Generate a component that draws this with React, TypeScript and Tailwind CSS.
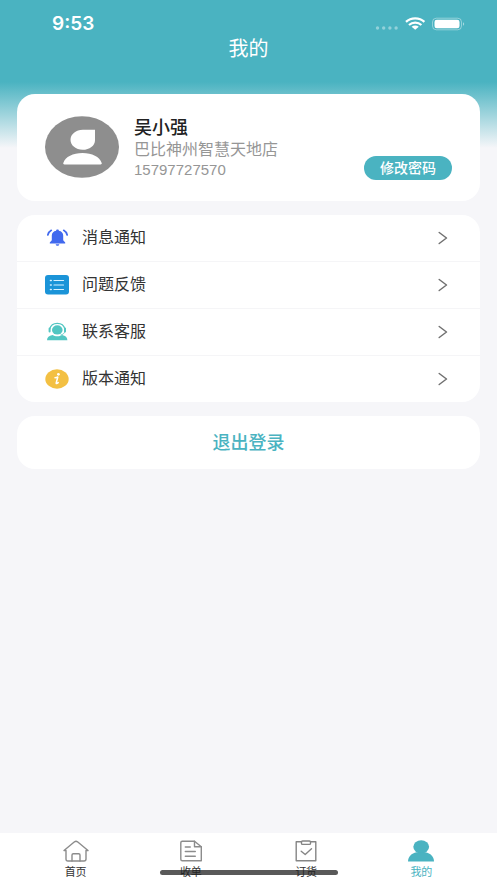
import type { ReactNode } from "react";

interface MenuItem {
  label: string;
  icon: ReactNode;
}

interface Tab {
  label: string;
  icon: ReactNode;
  active?: boolean;
}

const BellIcon = () => (
  <svg width="24" height="20" viewBox="0 0 24 20" fill="none">
    <path d="M12.500 1.500c.9 0 1.400.5 1.400 1.200 2.700.5 4.300 2.300 4.300 4.900v4.700l2 2.200v.9H4.800v-.9l2-2.200V7.600c0-2.600 1.600-4.400 4.300-4.900 0-.7.500-1.200 1.400-1.200Z" fill="#4169ee" />
    <path d="M10.700 16.300h3.600c-.2 1-.9 1.500-1.800 1.500s-1.600-.5-1.800-1.500Z" fill="#4169ee" />
    <path d="M6.300 2.300C4.500 3.300 3.300 4.900 2.800 7M18.700 2.300c1.800 1 3 2.600 3.500 4.700" stroke="#4169ee" strokeWidth="1.700" strokeLinecap="round" />
  </svg>
);

const ListIcon = () => (
  <svg width="24" height="20" viewBox="0 0 24 20" fill="none">
    <rect width="24" height="19.500" rx="3" fill="#1b94d8" />
    <path d="M9 5.500h9.500M9 10h9.500M9 14.500h9.500" stroke="#d8f1ff" strokeWidth="1.200" strokeLinecap="round" />
    <path d="M5.500 5.500h.7M5.500 10h.7M5.500 14.500h.7" stroke="#d8f1ff" strokeWidth="1.600" strokeLinecap="round" />
  </svg>
);

const ServiceIcon = () => (
  <svg width="24" height="20" viewBox="0 0 24 20" fill="none">
    <ellipse cx="12.300" cy="7.900" rx="5.300" ry="4.600" fill="#52c6c2" />
    <path d="M4.700 7C5.500 3.700 8.500 1.300 12.300 1.300S19.100 3.700 19.900 7" stroke="#52c6c2" strokeWidth="1.200" />
    <path d="M4.600 6.600v3M20 6.600v3" stroke="#52c6c2" strokeWidth="2" strokeLinecap="round" />
    <path d="M19.800 9.600c-.4 1.800-2 3-4.300 3.500" stroke="#52c6c2" strokeWidth=".8" />
    <path d="M2 18.300c.1-3 1.900-4.900 5.600-5.400 1.200.9 2.800 1.400 4.700 1.400s3.500-.5 4.700-1.400c3.700.5 5.300 2.400 5.400 5.400H2Z" fill="#52c6c2" />
  </svg>
);

const InfoIcon = () => (
  <svg width="24" height="20" viewBox="0 0 24 20" fill="none">
    <ellipse cx="12" cy="10" rx="11.700" ry="9.700" fill="#f3c043" />
    <circle cx="13.400" cy="5.300" r="1.400" fill="#fff" />
    <path d="M10 8.700c1.100 0 2-.3 2.800-.7l-1.600 5.900c-.2 1 .6 1 2-.3" stroke="#fff" strokeWidth="1.500" strokeLinecap="round" strokeLinejoin="round" />
  </svg>
);

const HomeIcon = () => (
  <svg width="26" height="22" viewBox="0 0 26 22" fill="none" stroke="#8c8c8c" strokeWidth="1.400" strokeLinecap="round" strokeLinejoin="round">
    <path d="M1 10.500 11.500 1.800q1.500-1 3 0L25 10.500h-2V19q0 2-2 2H5q-2 0-2-2v-8.500H1Z" />
    <path d="M9 21v-6q0-1.300 1.300-1.300h5.400q1.300 0 1.300 1.300v6" />
  </svg>
);

const ReceiptIcon = () => (
  <svg width="26" height="22" viewBox="0 0 26 22" fill="none" stroke="#8c8c8c" strokeWidth="1.400" strokeLinecap="round" strokeLinejoin="round">
    <path d="M16.500 1.300H4.300q-1.500 0-1.500 1.500v16.400q0 1.500 1.500 1.500h19V6.700L16.500 1.300Z" />
    <path d="M16.500 1.300v5.400h6.800M7.300 7h5M7.300 11.500h10M7.300 16.300h10" />
  </svg>
);

const OrderIcon = () => (
  <svg width="26" height="22" viewBox="0 0 26 22" fill="none" stroke="#858585" strokeWidth="1.400" strokeLinecap="round" strokeLinejoin="round">
    <path d="M8.500 1.700H3.200v19h19.600v-19h-5.300" />
    <rect x="8.500" y="1" width="9" height="3.400" rx="1" />
    <path d="m8.200 11.200 4 3.300 6.300-5.700" />
  </svg>
);

const MineIcon = () => (
  <svg width="26" height="22" viewBox="0 0 26 22" fill="#4ab3c1">
    <ellipse cx="13.200" cy="6.800" rx="7.900" ry="6.500" />
    <path d="M0 21.500c0-5 3.500-8.300 8.500-9.300h9c5 1 8.500 4.300 8.500 9.300H0Z" />
  </svg>
);

const ChevronIcon = () => (
  <svg width="10" height="14" viewBox="0 0 10 14" fill="none" stroke="#707070" strokeWidth="1.500" strokeLinecap="round" strokeLinejoin="round">
    <path d="M1.200 1.500 8.500 7l-7.300 5.500" />
  </svg>
);

const Avatar = () => (
  <svg className="shrink-0" width="74" height="62" viewBox="0 0 74 62">
    <ellipse cx="37" cy="31" rx="37" ry="30.800" fill="#8e8e8e" />
    <path d="M37.800 13.800H50v10.400c0 5.500-5.500 9.600-12.300 9.600s-12.200-4.400-12.200-10 5.500-10 12.300-10Z" fill="#fff" />
    <path d="M19.500 48.500c-1 0-1.500-.6-1.200-1.400C20.300 40.700 28 37 37.500 37s17.200 3.700 19.200 10.100c.3.800-.2 1.400-1.200 1.400h-36Z" fill="#fff" />
  </svg>
);

const StatusIcons = () => (
  <svg width="90" height="14" viewBox="0 0 90 14" fill="none">
    <g fill="#fff" fillOpacity=".4">
      <circle cx="2.500" cy="11" r="1.700" />
      <circle cx="8.700" cy="11" r="1.700" />
      <circle cx="14.900" cy="11" r="1.700" />
      <circle cx="21.100" cy="11" r="1.700" />
    </g>
    <path d="M31 4.900C36 .1 44.400.1 49.400 4.900M34 8c3.500-3.200 9-3.200 12.400 0" stroke="#fff" strokeWidth="2.200" />
    <path d="M36.600 9.700c2-1.600 5.200-1.600 7.200 0l-3.600 3-3.600-3Z" fill="#fff" />
    <rect x="57.500" y="1.200" width="29" height="11.600" rx="3.800" stroke="#fff" strokeOpacity=".4" />
    <rect x="59.500" y="2.800" width="25" height="8.400" rx="2.300" fill="#fff" />
    <path d="M88 5.300c1.600.5 1.600 2.900 0 3.400V5.300Z" fill="#fff" fillOpacity=".5" />
  </svg>
);

const menuItems: MenuItem[] = [
  { label: "消息通知", icon: <BellIcon /> },
  { label: "问题反馈", icon: <ListIcon /> },
  { label: "联系客服", icon: <ServiceIcon /> },
  { label: "版本通知", icon: <InfoIcon /> },
];

const tabs: Tab[] = [
  { label: "首页", icon: <HomeIcon /> },
  { label: "收单", icon: <ReceiptIcon /> },
  { label: "订货", icon: <OrderIcon /> },
  { label: "我的", icon: <MineIcon />, active: true },
];

export default function App() {
  return (
    <div className="flex min-h-screen flex-col bg-[#f6f6f9] bg-[linear-gradient(#4ab3c1_0px,#4ab3c1_82px,#f6f6f9_148px)] font-['Liberation_Sans','Noto_Sans_CJK_SC',sans-serif] text-[#333]">
      <header className="h-[94px] text-white">
        <div className="flex items-center justify-between pt-3 pr-8 pl-[52px]">
          <span className="font-['Inter',sans-serif] text-[19px] leading-6 font-semibold">9:53</span>
          <StatusIcons />
        </div>
        <h1 className="text-center text-xl leading-[26px]">我的</h1>
      </header>

      <main className="flex flex-1 flex-col gap-[14px] px-[17px]">
        <section className="flex items-start rounded-[18px] bg-white px-7 pt-[22px] pb-[21px]">
          <Avatar />
          <div className="ml-[15px] flex-1">
            <h2 className="text-lg leading-6 font-medium text-[#222]">吴小强</h2>
            <p className="text-base leading-5 text-[#969696]">巴比神州智慧天地店</p>
            <p className="text-[15px] leading-5 text-[#969696]">15797727570</p>
          </div>
          <button type="button" className="h-6 self-end rounded-full bg-[#4ab3c1] px-4 text-sm leading-6 font-medium text-white">
            修改密码
          </button>
        </section>

        <nav className="rounded-[18px] bg-white">
          <ul className="divide-y divide-[#f5f5f7]">
            {menuItems.map((item) => (
              <li key={item.label}>
                <a href="#" className="flex h-[46px] items-center pr-8 pl-7">
                  {item.icon}
                  <span className="ml-[13px] flex-1 text-base">{item.label}</span>
                  <ChevronIcon />
                </a>
              </li>
            ))}
          </ul>
        </nav>

        <button type="button" className="h-[53px] rounded-[18px] bg-white text-lg font-medium text-[#4ab3c1]">
          退出登录
        </button>
      </main>

      <footer className="relative bg-white px-[18px]">
        <nav className="grid h-[50px] grid-cols-4">
          {tabs.map((tab) => (
            <a
              key={tab.label}
              href="#"
              className={`flex flex-col items-center pt-[7px] text-[11px] leading-5 ${tab.active ? "text-[#4ab3c1]" : "text-[#333]"}`}
            >
              {tab.icon}
              {tab.label}
            </a>
          ))}
        </nav>
        {/* home indicator */}
        <div className="absolute bottom-2 left-1/2 h-[5px] w-[178px] -translate-x-1/2 rounded-full bg-[#222]/75" />
      </footer>
    </div>
  );
}
